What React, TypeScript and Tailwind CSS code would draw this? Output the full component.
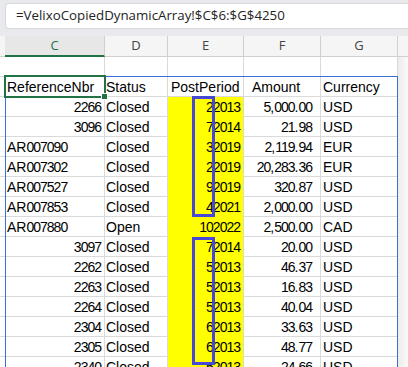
import React from "react";

type Row = [string, string, string, string, string];

const rows: Row[] = [
  ["2266", "Closed", "22013", "5,000.00", "USD"],
  ["3096", "Closed", "72014", "21.98", "USD"],
  ["AR007090", "Closed", "32019", "2,119.94", "EUR"],
  ["AR007302", "Closed", "22019", "20,283.36", "EUR"],
  ["AR007527", "Closed", "92019", "320.87", "USD"],
  ["AR007853", "Closed", "42021", "2,000.00", "USD"],
  ["AR007880", "Open", "102022", "2,500.00", "CAD"],
  ["3097", "Closed", "72014", "20.00", "USD"],
  ["2262", "Closed", "52013", "46.37", "USD"],
  ["2263", "Closed", "52013", "16.83", "USD"],
  ["2264", "Closed", "52013", "40.04", "USD"],
  ["2304", "Closed", "62013", "33.63", "USD"],
  ["2305", "Closed", "62013", "48.77", "USD"],
  ["2340", "Closed", "52013", "24.66", "USD"],
];

function Txt({ s }: { s: string }) {
  const parts = s.split(/(\d+)/);
  return (
    <>
      {parts.map((p, i) =>
        /\d/.test(p) ? (
          <span key={i} className="tracking-[-1px]">
            {p}
          </span>
        ) : (
          <React.Fragment key={i}>{p}</React.Fragment>
        )
      )}
    </>
  );
}

const cellBase =
  "h-[20px] border-b border-r border-b-[#dadada] border-r-[#dadada] leading-[20px] whitespace-nowrap overflow-hidden";

function HeaderLetter({ l, active }: { l: string; active?: boolean }) {
  return (
    <div
      className={
        active
          ? "flex h-[21px] items-center justify-center border-r border-b-2 border-r-[#d0d0d0] border-b-[#217346] bg-[#e7e7e7] text-[13px] text-[#217346]"
          : "flex h-[21px] items-center justify-center border-r border-b border-r-[#d0d0d0] border-b-[#d0d0d0] bg-[#f5f5f5] text-[13px] text-[#444444]"
      }
    >
      {l}
    </div>
  );
}

export default function App() {
  return (
    <div className="relative h-[367px] w-[408px] overflow-hidden bg-white font-['Liberation_Sans',Arial,sans-serif] text-[14px] text-black">
      {/* formula bar */}
      <div className="h-[36px] bg-[#e8eaee] pl-[5px] pt-[3px]">
        <div className="flex h-[26px] items-center rounded-l-[4px] border border-r-0 border-[#d6d8dc] bg-white pl-[10px] font-['Open_Sans',sans-serif] text-[13.3px] text-[#242424]">
          =VelixoCopiedDynamicArray!$C$6:$G$4250
        </div>
      </div>

      {/* grid */}
      <div className="grid grid-cols-[5px_100px_63px_76px_77px_77px_10px] font-['Liberation_Sans',Arial,sans-serif]">
        {/* column header row */}
        <div className="h-[21px] border-b border-b-[#d0d0d0] bg-[#f5f5f5]" />
        <div className="font-['Open_Sans',sans-serif]">
          <HeaderLetter l="C" active />
        </div>
        <div className="font-['Open_Sans',sans-serif]">
          <HeaderLetter l="D" />
        </div>
        <div className="font-['Open_Sans',sans-serif]">
          <HeaderLetter l="E" />
        </div>
        <div className="font-['Open_Sans',sans-serif]">
          <HeaderLetter l="F" />
        </div>
        <div className="font-['Open_Sans',sans-serif]">
          <HeaderLetter l="G" />
        </div>
        <div className="h-[21px] border-b border-b-[#d0d0d0] bg-[#f5f5f5]" />

        {/* blank row */}
        <div className="h-[20px] border-b border-b-[#dadada]" />
        <div className={cellBase} />
        <div className={cellBase} />
        <div className={cellBase} />
        <div className={cellBase} />
        <div className={cellBase} />
        <div className="h-[20px] bg-linear-to-r from-[#ececec] to-[#fafafa]" />

        {/* table header */}
        <div className="h-[20px] border-b border-b-[#dadada]" />
        <div className={cellBase + " pl-[2px]"}>ReferenceNbr</div>
        <div className={cellBase + " pl-[1px]"}>Status</div>
        <div className={cellBase + " pl-[3px]"}>PostPeriod</div>
        <div className={cellBase + " pl-[8px]"}>Amount</div>
        <div className={cellBase + " pl-[2px]"}>Currency</div>
        <div className="h-[20px] bg-linear-to-r from-[#ececec] to-[#fafafa]" />

        {rows.map((r, i) => {
          const numericRef = /^\d+$/.test(r[0]);
          return (
            <React.Fragment key={i}>
              <div className="h-[20px] border-b border-b-[#dadada]" />
              <div
                className={
                  numericRef
                    ? cellBase + " pr-[3px] text-right"
                    : cellBase + " pl-[2px]"
                }
              >
                <Txt s={r[0]} />
              </div>
              <div className={cellBase + " pl-[1px]"}>{r[1]}</div>
              <div className="h-[20px] overflow-hidden whitespace-nowrap border-b border-r border-b-[#ffff00] border-r-[#dadada] bg-[#ffff00] pr-[3px] text-right leading-[20px]">
                <Txt s={r[2]} />
              </div>
              <div className={cellBase + " pr-[8px] text-right"}>
                <Txt s={r[3]} />
              </div>
              <div className={cellBase + " pl-[2px]"}>{r[4]}</div>
              <div className="h-[20px] bg-linear-to-r from-[#ececec] to-[#fafafa]" />
            </React.Fragment>
          );
        })}
      </div>

      {/* table outline */}
      <div className="pointer-events-none absolute left-[5px] top-[76px] h-[320px] w-[393px] border border-[#3a6fd6]" />
      {/* active cell selection */}
      <div className="pointer-events-none absolute left-[4px] top-[75px] h-[23px] w-[102px] border-2 border-[#217346]" />
      <div className="pointer-events-none absolute left-[101px] top-[93px] h-[7px] w-[7px] border border-white bg-[#217346]" />
      {/* annotation rectangles */}
      <div className="pointer-events-none absolute left-[192px] top-[96px] h-[121px] w-[23px] border-[3px] border-[#4848d8]" />
      <div className="pointer-events-none absolute left-[192px] top-[237px] h-[128px] w-[23px] border-[3px] border-[#4848d8]" />
    </div>
  );
}
